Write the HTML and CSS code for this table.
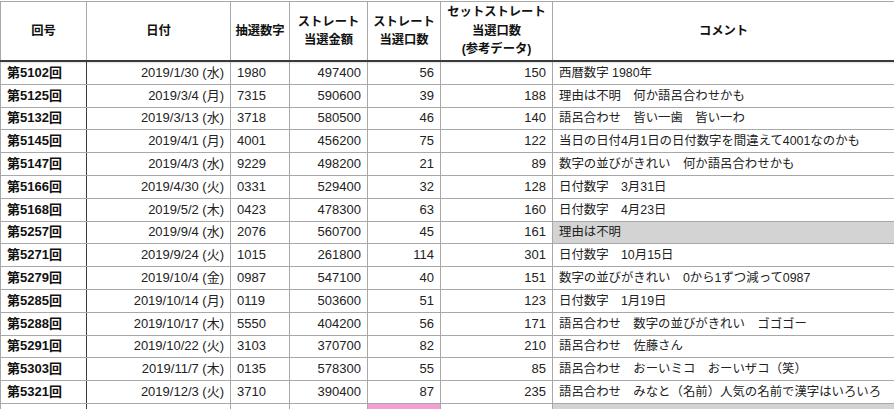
FILE: index.html
```html
<!DOCTYPE html>
<html lang="ja">
<head>
<meta charset="utf-8">
<link rel="stylesheet" href="styles.css">
</head>
<body>
<table class="lottery">
  <colgroup>
    <col class="c-no"><col class="c-date"><col class="c-num"><col class="c-amt"><col class="c-cnt"><col class="c-set"><col class="c-cmt">
  </colgroup>
  <thead>
    <tr>
      <th>回号</th>
      <th>日付</th>
      <th>抽選数字</th>
      <th>ストレート<br>当選金額</th>
      <th>ストレート<br>当選口数</th>
      <th>セットストレート<br>当選口数<br>(参考データ)</th>
      <th>コメント</th>
    </tr>
  </thead>
  <tbody>
    <tr><td class="no">第5102回</td><td class="r">2019/1/30 (水)</td><td>1980</td><td class="r">497400</td><td class="r">56</td><td class="r">150</td><td class="cmt">西暦数字 1980年</td></tr>
    <tr><td class="no">第5125回</td><td class="r">2019/3/4 (月)</td><td>7315</td><td class="r">590600</td><td class="r">39</td><td class="r">188</td><td class="cmt">理由は不明　何か語呂合わせかも</td></tr>
    <tr><td class="no">第5132回</td><td class="r">2019/3/13 (水)</td><td>3718</td><td class="r">580500</td><td class="r">46</td><td class="r">140</td><td class="cmt">語呂合わせ　皆い一歯　皆い一わ</td></tr>
    <tr><td class="no">第5145回</td><td class="r">2019/4/1 (月)</td><td>4001</td><td class="r">456200</td><td class="r">75</td><td class="r">122</td><td class="cmt">当日の日付4月1日の日付数字を間違えて4001なのかも</td></tr>
    <tr><td class="no">第5147回</td><td class="r">2019/4/3 (水)</td><td>9229</td><td class="r">498200</td><td class="r">21</td><td class="r">89</td><td class="cmt">数字の並びがきれい　何か語呂合わせかも</td></tr>
    <tr><td class="no">第5166回</td><td class="r">2019/4/30 (火)</td><td>0331</td><td class="r">529400</td><td class="r">32</td><td class="r">128</td><td class="cmt">日付数字　3月31日</td></tr>
    <tr><td class="no">第5168回</td><td class="r">2019/5/2 (木)</td><td>0423</td><td class="r">478300</td><td class="r">63</td><td class="r">160</td><td class="cmt">日付数字　4月23日</td></tr>
    <tr><td class="no">第5257回</td><td class="r">2019/9/4 (水)</td><td>2076</td><td class="r">560700</td><td class="r">45</td><td class="r">161</td><td class="cmt gray">理由は不明</td></tr>
    <tr><td class="no">第5271回</td><td class="r">2019/9/24 (火)</td><td>1015</td><td class="r">261800</td><td class="r">114</td><td class="r">301</td><td class="cmt">日付数字　10月15日</td></tr>
    <tr><td class="no">第5279回</td><td class="r">2019/10/4 (金)</td><td>0987</td><td class="r">547100</td><td class="r">40</td><td class="r">151</td><td class="cmt">数字の並びがきれい　0から1ずつ減って0987</td></tr>
    <tr><td class="no">第5285回</td><td class="r">2019/10/14 (月)</td><td>0119</td><td class="r">503600</td><td class="r">51</td><td class="r">123</td><td class="cmt">日付数字　1月19日</td></tr>
    <tr><td class="no">第5288回</td><td class="r">2019/10/17 (木)</td><td>5550</td><td class="r">404200</td><td class="r">56</td><td class="r">171</td><td class="cmt">語呂合わせ　数字の並びがきれい　ゴゴゴー</td></tr>
    <tr><td class="no">第5291回</td><td class="r">2019/10/22 (火)</td><td>3103</td><td class="r">370700</td><td class="r">82</td><td class="r">210</td><td class="cmt">語呂合わせ　佐藤さん</td></tr>
    <tr><td class="no">第5303回</td><td class="r">2019/11/7 (木)</td><td>0135</td><td class="r">578300</td><td class="r">55</td><td class="r">85</td><td class="cmt">語呂合わせ　おーいミコ　おーいザコ（笑）</td></tr>
    <tr><td class="no">第5321回</td><td class="r">2019/12/3 (火)</td><td>3710</td><td class="r">390400</td><td class="r">87</td><td class="r">235</td><td class="cmt">語呂合わせ　みなと（名前）人気の名前で漢字はいろいろ</td></tr>
    <tr class="partial"><td class="no"></td><td></td><td></td><td></td><td class="pink"></td><td></td><td class="cmt gray"></td></tr>
  </tbody>
</table>
</body>
</html>
```

FILE: styles.css
```css
html, body {
  margin: 0;
  padding: 0;
  background: #ffffff;
}

body {
  padding-top: 1px;
  font-family: "Liberation Sans", "Noto Sans CJK JP", sans-serif;
  font-size: 13px;
  color: #222222;
}

.lottery {
  border-collapse: collapse;
  table-layout: fixed;
  width: 894px;
}

.c-no { width: 86px; }
.c-date { width: 144px; }
.c-num { width: 59px; }
.c-amt { width: 78px; }
.c-cnt { width: 73px; }
.c-set { width: 112px; }
.c-cmt { width: 342px; }

.lottery th {
  border: 1px solid #a8a8a8;
  border-bottom: 2px solid #3a3a3a;
  height: 58px;
  padding: 0 3px;
  font-weight: bold;
  font-size: 12.3px;
  line-height: 18.5px;
  color: #111111;
  text-align: center;
  vertical-align: middle;
}

.lottery td {
  border: 1px solid #a8a8a8;
  height: 21.8px;
  padding: 0 6px;
  line-height: 16px;
  white-space: nowrap;
  overflow: hidden;
  vertical-align: middle;
}

.lottery tbody tr:first-child td {
  box-shadow: inset 0 2px 2px -1px rgba(0, 0, 0, 0.12);
}

.lottery td.no {
  font-weight: bold;
  color: #111111;
  border-right: 1px solid #3a3a3a;
}

.lottery td.r {
  text-align: right;
}

.lottery td.cmt {
  font-size: 12.4px;
}

.lottery td.gray {
  background: #d3d3d3;
}

.lottery td.pink {
  background: #f3a0d2;
}
```
